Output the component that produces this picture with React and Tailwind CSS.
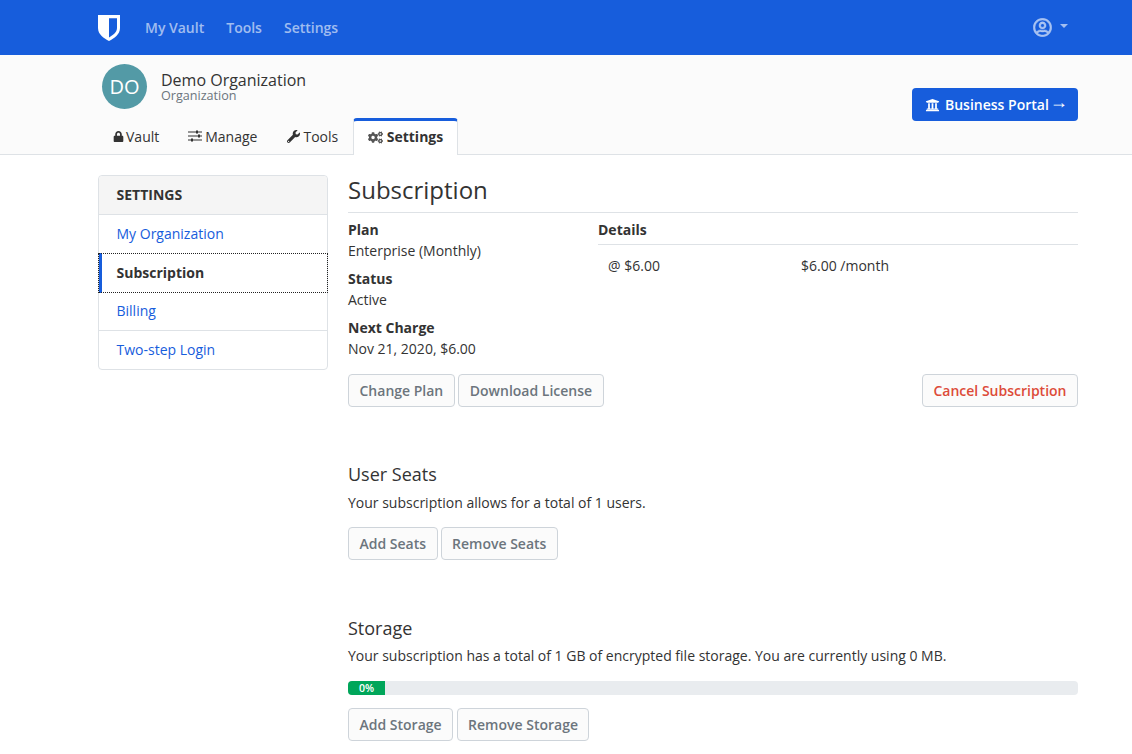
import { FaLock, FaWrench, FaCogs, FaUniversity, FaRegUserCircle } from "react-icons/fa";

function Logo() {
  return (
    <svg viewBox="0 0 22 26" className="w-[22px] h-[26px]">
      <path fill="#fff" d="M0 0H22V13C22 19.5 16 23.5 11 26C6 23.5 0 19.5 0 13Z" />
      <path fill="#175ddc" d="M11 3.2H19V13C19 17.2 15 20.2 11 22.4Z" />
    </svg>
  );
}

function SlidersIcon() {
  return (
    <svg viewBox="0 0 14 12" className="w-[14px] h-[12px]" fill="#333">
      <rect x="0" y="1.5" width="14" height="1" />
      <rect x="0" y="5.5" width="14" height="1" />
      <rect x="0" y="9.5" width="14" height="1" />
      <rect x="8" y="0.5" width="2" height="3" />
      <rect x="10" y="4.5" width="2" height="3" />
      <rect x="3" y="8.5" width="2" height="3" />
    </svg>
  );
}

function Btn({ children, className = "" }) {
  return (
    <button className={`h-[33px] px-[10.5px] rounded-[4px] border border-[#ced4da] bg-[#fbfbfb] font-semibold text-[14px] text-[#6c757d] ${className}`}>
      {children}
    </button>
  );
}

function Tab({ icon, label, active }) {
  if (active) {
    return (
      <div className="h-[37px] -mb-px ml-[0.5px] flex items-center gap-[4px] pl-[14px] pr-[13.5px] bg-white border-x border-[#dee2e6] border-t-[3px] border-t-[#175ddc] rounded-t-[4px] font-bold text-[#333] text-[14px] mt-px">
        {icon}
        <span className="-mt-[4px]">{label}</span>
      </div>
    );
  }
  return (
    <div className="h-[36px] flex items-center gap-[3px] pl-[15px] pr-[14px] text-[#333] text-[14px]">
      {icon}
      {label}
    </div>
  );
}

export default function App() {
  return (
    <div className="h-[754px] overflow-hidden bg-white text-[14px] text-[#333] font-['Open_Sans',sans-serif]">
      {/* Nav */}
      <nav className="h-[55px] bg-[#175ddc] pl-[98px] pr-[64px] flex items-center">
        <Logo />
        <div className="flex items-center gap-[22px] ml-[25px] mb-px font-semibold text-[14px] text-white/60">
          <span>My Vault</span>
          <span>Tools</span>
          <span>Settings</span>
        </div>
        <div className="ml-auto flex items-center gap-[8px] text-white/60">
          <FaRegUserCircle className="w-[19px] h-[19px] stroke-current stroke-[12px]" />
          <span className="w-0 h-0 border-x-[4px] border-x-transparent border-t-[4px] border-t-white/60 mb-[3px]" />
        </div>
      </nav>

      {/* Org header */}
      <div className="h-[100px] bg-[#fbfbfb] border-b border-[#dee2e6] pl-[98px] pr-[54px] flex flex-col">
        <div className="flex items-start justify-between h-[63px]">
          <div className="flex items-start gap-[14px] pl-[4px] pt-[9px]">
            <div className="w-[45px] h-[45px] rounded-full bg-[#539aa6] text-white text-[20px] flex items-center justify-center">DO</div>
            <div className="mt-[8px]">
              <div className="text-[16px] leading-[16px]">Demo Organization</div>
              <div className="text-[12.6px] leading-[16px] text-[#6c757d]">Organization</div>
            </div>
          </div>
          <button className="mt-[33px] h-[33px] w-[166px] pl-[12px] rounded-[4px] bg-[#175ddc] text-white font-semibold text-[14px] flex items-center gap-[4px]">
            <FaUniversity className="w-[17px] h-[14px]" />
            <span className="flex items-center gap-[1px]">
              Business Portal
              <span className="font-['Liberation_Sans'] font-normal text-[18px] leading-none -mt-[6px]">→</span>
            </span>
          </button>
        </div>
        <div className="flex items-end h-[36px]">
          <Tab icon={<FaLock className="w-[11px] h-[11px] mr-[-1px]" />} label="Vault" />
          <Tab icon={<SlidersIcon />} label="Manage" />
          <Tab icon={<FaWrench className="w-[13px] h-[13px] ml-px" />} label="Tools" />
          <Tab active icon={<FaCogs className="w-[15px] h-[13px] text-[#555] -mt-[2px]" />} label="Settings" />
        </div>
      </div>

      {/* Body */}
      <div className="pl-[98px] pr-[54px] pt-[20px] flex gap-[20px]">
        {/* Sidebar */}
        <aside className="w-[230px] shrink-0 h-[195px] rounded-[4px] border border-[#dee2e6] bg-white">
          <div className="h-[39px] pl-[17.5px] pb-[2px] flex items-center rounded-t-[4px] bg-[#f5f5f5] border-b border-[#dee2e6] font-bold text-[14px] text-[#333]">SETTINGS</div>
          <div className="h-[38px] pl-[17.5px] pb-[2px] flex items-center text-[#175ddc]">My Organization</div>
          <div className="h-[40px] -mx-px outline outline-1 outline-dotted outline-[#222] -outline-offset-1">
            <div className="h-full ml-px pl-[14.5px] pb-[2px] flex items-center font-bold text-[#333] border-l-[3px] border-l-[#175ddc]">Subscription</div>
          </div>
          <div className="h-[38px] pl-[17.5px] pb-[2px] flex items-center text-[#175ddc] border-b border-[#dee2e6]">Billing</div>
          <div className="h-[38px] pl-[17.5px] pb-[2px] flex items-center text-[#175ddc]">Two-step Login</div>
        </aside>

        {/* Main */}
        <main className="flex-1 min-w-0">
          <h1 className="text-[24px] leading-[32px] -mt-[1px] pb-[6px] border-b border-[#dee2e6]">Subscription</h1>

          <div className="flex mt-[7px]">
            <div className="w-[250px] shrink-0">
              <div className="font-bold leading-[19px]">Plan</div>
              <div className="leading-[19px] mt-[2px]">Enterprise (Monthly)</div>
              <div className="font-bold leading-[19px] mt-[9px]">Status</div>
              <div className="leading-[19px] mt-[2px]">Active</div>
              <div className="font-bold leading-[19px] mt-[9px]">Next Charge</div>
              <div className="leading-[19px] mt-[2px]">Nov 21, 2020, $6.00</div>
            </div>
            <div className="flex-1">
              <div className="font-bold leading-[19px] pb-[5px] border-b border-[#dee2e6]">Details</div>
              <div className="flex mt-[11px] leading-[19px]">
                <span className="pl-[10px] w-[203px]">@ $6.00</span>
                <span>$6.00 /month</span>
              </div>
            </div>
          </div>

          <div className="flex items-center gap-[3px] mt-[16px]">
            <Btn>Change Plan</Btn>
            <Btn className="!px-[11px]">Download License</Btn>
            <Btn className="ml-auto !text-[#dd4b39]">Cancel Subscription</Btn>
          </div>

          <h2 className="text-[18px] leading-[24px] mt-[55px]">User Seats</h2>
          <p className="leading-[19px] mt-[7px]">Your subscription allows for a total of 1 users.</p>
          <div className="flex gap-[3px] mt-[15px]">
            <Btn>Add Seats</Btn>
            <Btn>Remove Seats</Btn>
          </div>

          <h2 className="text-[18px] leading-[24px] mt-[56px]">Storage</h2>
          <p className="leading-[19px] mt-[6px]">Your subscription has a total of 1 GB of encrypted file storage. You are currently using 0 MB.</p>
          <div className="h-[14px] mt-[16px] rounded-[4px] bg-[#e9ecef] overflow-hidden flex">
            <div className="w-[37px] bg-[#00a65a] text-white text-[10.5px] font-semibold leading-[14px] text-center">0%</div>
          </div>
          <div className="flex gap-[3.5px] mt-[13px]">
            <Btn>Add Storage</Btn>
            <Btn>Remove Storage</Btn>
          </div>
        </main>
      </div>
    </div>
  );
}
